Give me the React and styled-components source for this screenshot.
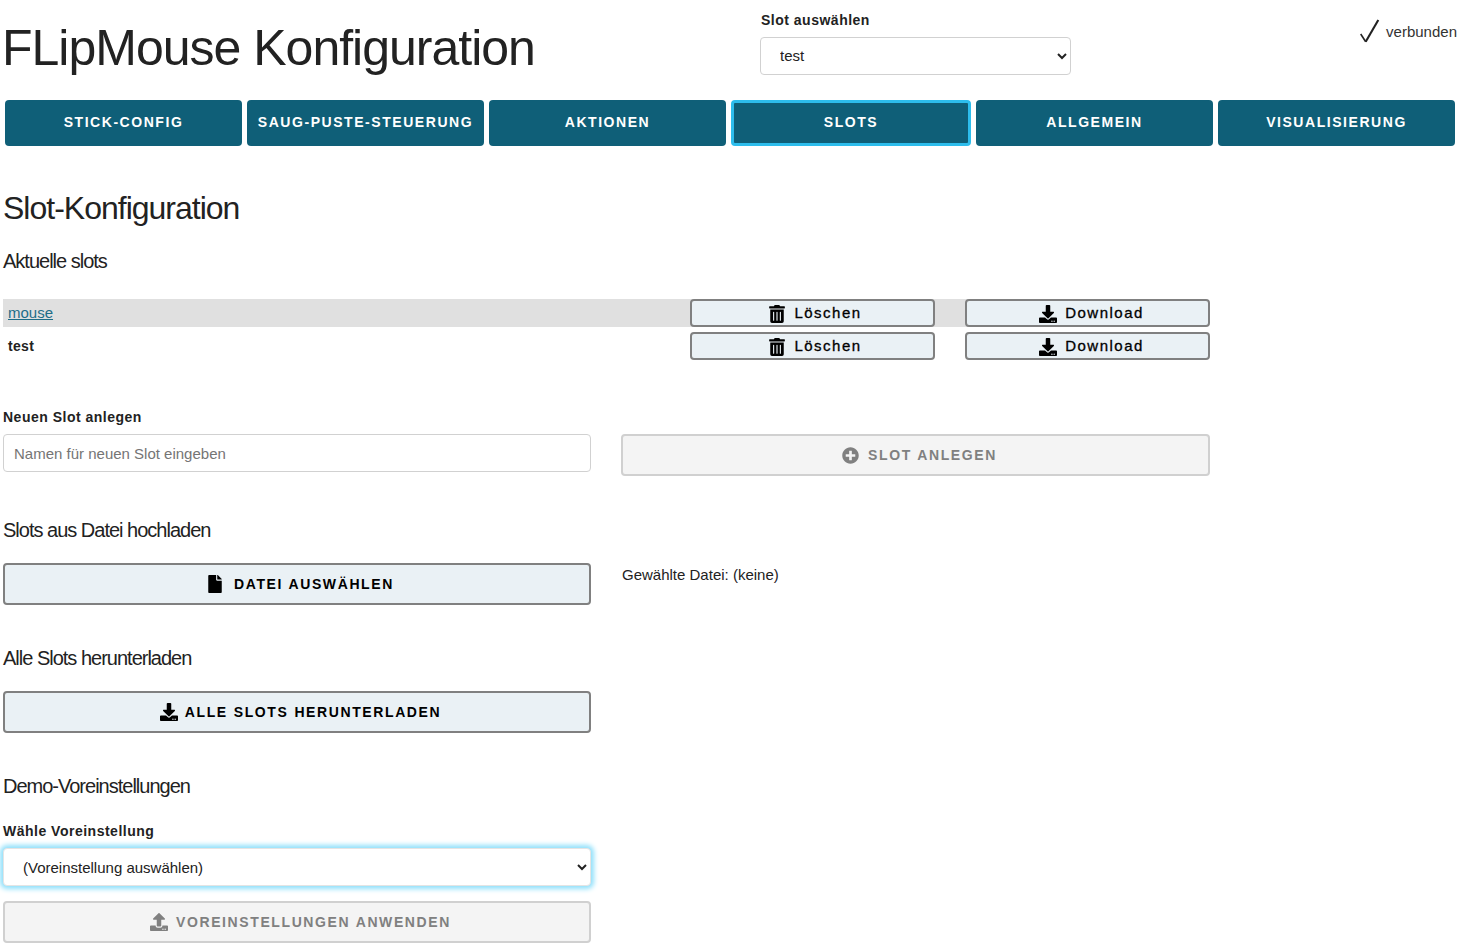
import React from 'react';
import styled, { createGlobalStyle, css } from 'styled-components';
import { FaDownload, FaFile, FaPlusCircle, FaTrashAlt, FaUpload } from 'react-icons/fa';

const GlobalStyle = createGlobalStyle`
  html, body { margin: 0; padding: 0; background: #fff; }
  * { box-sizing: border-box; }
  body {
    font-family: "Liberation Sans", Arial, sans-serif;
    font-size: 15px;
    line-height: 1.6;
    color: #222;
  }
`;

const Page = styled.div`
  width: 1472px;
  height: 943px;
  overflow: hidden;
  padding: 0 3px;
`;

const Header = styled.header`
  display: flex;
  height: 100px;
`;

const Title = styled.h1`
  width: 757px;
  margin: 0;
  padding-top: 21px;
  font-size: 50px;
  font-weight: 300;
  line-height: 55px;
  letter-spacing: -1px;
  text-indent: -1px;
`;

const Label = styled.label`
  display: block;
  margin-bottom: 5px;
  font-size: 14px;
  font-weight: 600;
  line-height: 24px;
  letter-spacing: 0.5px;
`;

const SlotPicker = styled.div`
  width: 311px;
  padding-top: 8px;

  ${Label} { padding-left: 1px; }
`;

const Select = styled.select`
  display: block;
  width: 100%;
  height: 38px;
  padding: 4px 15px 6px;
  background: #fff;
  border: 1px solid #d1d1d1;
  border-radius: 4px;
  font-family: inherit;
  font-size: 15px;
  color: #222;
  ${(props) => props.$focused && css`
    padding: 6px 15px;
    border-color: #e4e4e4;
    box-shadow: 0 0 5px 3px #8fe0fb;
  `}
`;

const Status = styled.div`
  display: flex;
  flex: 1;
  justify-content: flex-end;
  gap: 6px;
  padding: 18px 12px 0 0;
  font-size: 15px;
  line-height: 28px;
  color: #333;
`;

const Tabs = styled.nav`
  display: grid;
  grid-template-columns: 237px 237px 237px 240px 237px 237px;
  gap: 5px;
  margin-left: 2px;
`;

const Tab = styled.button`
  height: 46px;
  padding: 0 0 2px;
  background: #0f5f78;
  border: ${(props) => (props.$active ? '3px solid #2dbdec' : '0')};
  border-radius: 4px;
  font-family: inherit;
  font-size: 14px;
  font-weight: 700;
  letter-spacing: 1.55px;
  color: #fff;
  text-transform: uppercase;
`;

const Content = styled.main`
  width: 1207px;
`;

const PageHeading = styled.h2`
  margin: 42px 0 0;
  font-size: 32px;
  font-weight: 300;
  line-height: 40px;
  letter-spacing: -1px;
`;

const SectionHeading = styled.h3`
  margin: ${(props) => props.$top}px 0 0;
  font-size: 20px;
  font-weight: 300;
  line-height: 26px;
  letter-spacing: -1px;
`;

const SlotList = styled.div`
  display: flex;
  flex-direction: column;
  gap: 5px;
  margin-top: 25px;
`;

const SlotRow = styled.div`
  display: grid;
  grid-template-columns: 1fr 245px 245px;
  column-gap: 30px;
  align-items: center;
  height: 28px;
  background: ${(props) => (props.$shaded ? 'linear-gradient(to right, #e0e0e0 965px, transparent 965px)' : 'transparent')};
`;

const SlotName = styled.div`
  padding-left: 5px;
  font-size: 15px;
`;

const SlotLink = styled.a`
  color: #1d6d88;
  text-decoration: underline;
`;

const ActiveSlot = styled.strong`
  font-weight: 700;
  font-size: 14px;
  letter-spacing: 0.3px;
`;

const SmallButton = styled.button`
  display: flex;
  align-items: center;
  justify-content: center;
  gap: 8px;
  height: 28px;
  padding: 0 0 2px ${(props) => props.$indent}px;
  background: #eaf1f5;
  border: 2px solid #808080;
  border-radius: 4px;
  font-family: inherit;
  font-size: 15px;
  font-weight: 400;
  letter-spacing: 1.5px;
  color: #000;
  -webkit-text-stroke: 0.3px #000;

  svg { margin-top: 4px; }
`;

const FormRow = styled.div`
  display: grid;
  grid-template-columns: 588px 589px;
  column-gap: 30px;
  align-items: start;
`;

const NameInput = styled.input`
  display: block;
  width: 100%;
  height: 38px;
  padding: 6px 10px;
  background: #fff;
  border: 1px solid #d1d1d1;
  border-radius: 4px;
  font-family: inherit;
  font-size: 15px;
  &::placeholder { color: #757575; opacity: 1; }
`;

const ActionButton = styled.button`
  display: flex;
  align-items: center;
  justify-content: center;
  gap: ${(props) => props.$gap}px;
  width: 100%;
  height: 42px;
  padding: 0 0 0 ${(props) => props.$indent}px;
  background: ${(props) => (props.disabled ? '#f4f4f4' : '#eaf1f5')};
  border: 2px solid ${(props) => (props.disabled ? '#d0d0d0' : '#808080')};
  border-radius: 4px;
  font-family: inherit;
  font-size: 14px;
  font-weight: 700;
  letter-spacing: 1.6px;
  word-spacing: 0.5px;
  color: ${(props) => (props.disabled ? '#808080' : '#000')};
  text-transform: uppercase;
`;

const FileNote = styled.div`
  padding-left: 1px;
  font-size: 15px;
  color: #222;
`;

const Block = styled.div`
  margin-top: ${(props) => props.$top}px;
`;

const CheckMark = () => (
  <svg width="22" height="26" viewBox="0 0 22 26" fill="none" stroke="#222">
    <path d="M2.7 16 L7.7 23.7" strokeWidth="1.6" />
    <path d="M7.7 23.7 L20.3 2" strokeWidth="2.1" />
  </svg>
);

const slots = [
  { name: 'mouse', active: false },
  { name: 'test', active: true },
];

export default function App() {
  return (
    <Page>
      <GlobalStyle />
      <Header>
        <Title>FLipMouse Konfiguration</Title>
        <SlotPicker>
          <Label>Slot auswählen</Label>
          <Select defaultValue="test">
            <option>mouse</option>
            <option>test</option>
          </Select>
        </SlotPicker>
        <Status>
          <CheckMark />
          <span>verbunden</span>
        </Status>
      </Header>
      <Tabs>
        <Tab>Stick-Config</Tab>
        <Tab>Saug-Puste-Steuerung</Tab>
        <Tab>Aktionen</Tab>
        <Tab $active>Slots</Tab>
        <Tab>Allgemein</Tab>
        <Tab>Visualisierung</Tab>
      </Tabs>
      <Content>
        <PageHeading>Slot-Konfiguration</PageHeading>
        <SectionHeading $top={20}>Aktuelle slots</SectionHeading>
        <SlotList>
          {slots.map((slot) => (
            <SlotRow key={slot.name} $shaded={!slot.active}>
              <SlotName>
                {slot.active ? <ActiveSlot>{slot.name}</ActiveSlot> : <SlotLink href="#">{slot.name}</SlotLink>}
              </SlotName>
              <SmallButton $indent={5}><FaTrashAlt size={18} />Löschen</SmallButton>
              <SmallButton $indent={8}><FaDownload size={18} />Download</SmallButton>
            </SlotRow>
          ))}
        </SlotList>
        <FormRow>
          <Block $top={45}>
            <Label>Neuen Slot anlegen</Label>
            <NameInput placeholder="Namen für neuen Slot eingeben" />
          </Block>
          <Block $top={74}>
            <ActionButton disabled $gap={9} $indent={8}><FaPlusCircle size={17} />Slot anlegen</ActionButton>
          </Block>
        </FormRow>
        <SectionHeading $top={41}>Slots aus Datei hochladen</SectionHeading>
        <FormRow>
          <Block $top={20}>
            <ActionButton $gap={10} $indent={6}><FaFile size={18} />Datei auswählen</ActionButton>
          </Block>
          <Block $top={20}>
            <FileNote>Gewählte Datei: (keine)</FileNote>
          </Block>
        </FormRow>
        <SectionHeading $top={40}>Alle Slots herunterladen</SectionHeading>
        <FormRow>
          <Block $top={20}>
            <ActionButton $gap={7} $indent={7}><FaDownload size={18} />Alle Slots herunterladen</ActionButton>
          </Block>
        </FormRow>
        <SectionHeading $top={40}>Demo-Voreinstellungen</SectionHeading>
        <FormRow>
          <Block $top={20}>
            <Label>Wähle Voreinstellung</Label>
            <Select $focused defaultValue="none">
              <option value="none">(Voreinstellung auswählen)</option>
            </Select>
            <Block $top={15}>
              <ActionButton disabled $gap={8} $indent={7}><FaUpload size={18} />Voreinstellungen anwenden</ActionButton>
            </Block>
          </Block>
        </FormRow>
      </Content>
    </Page>
  );
}
